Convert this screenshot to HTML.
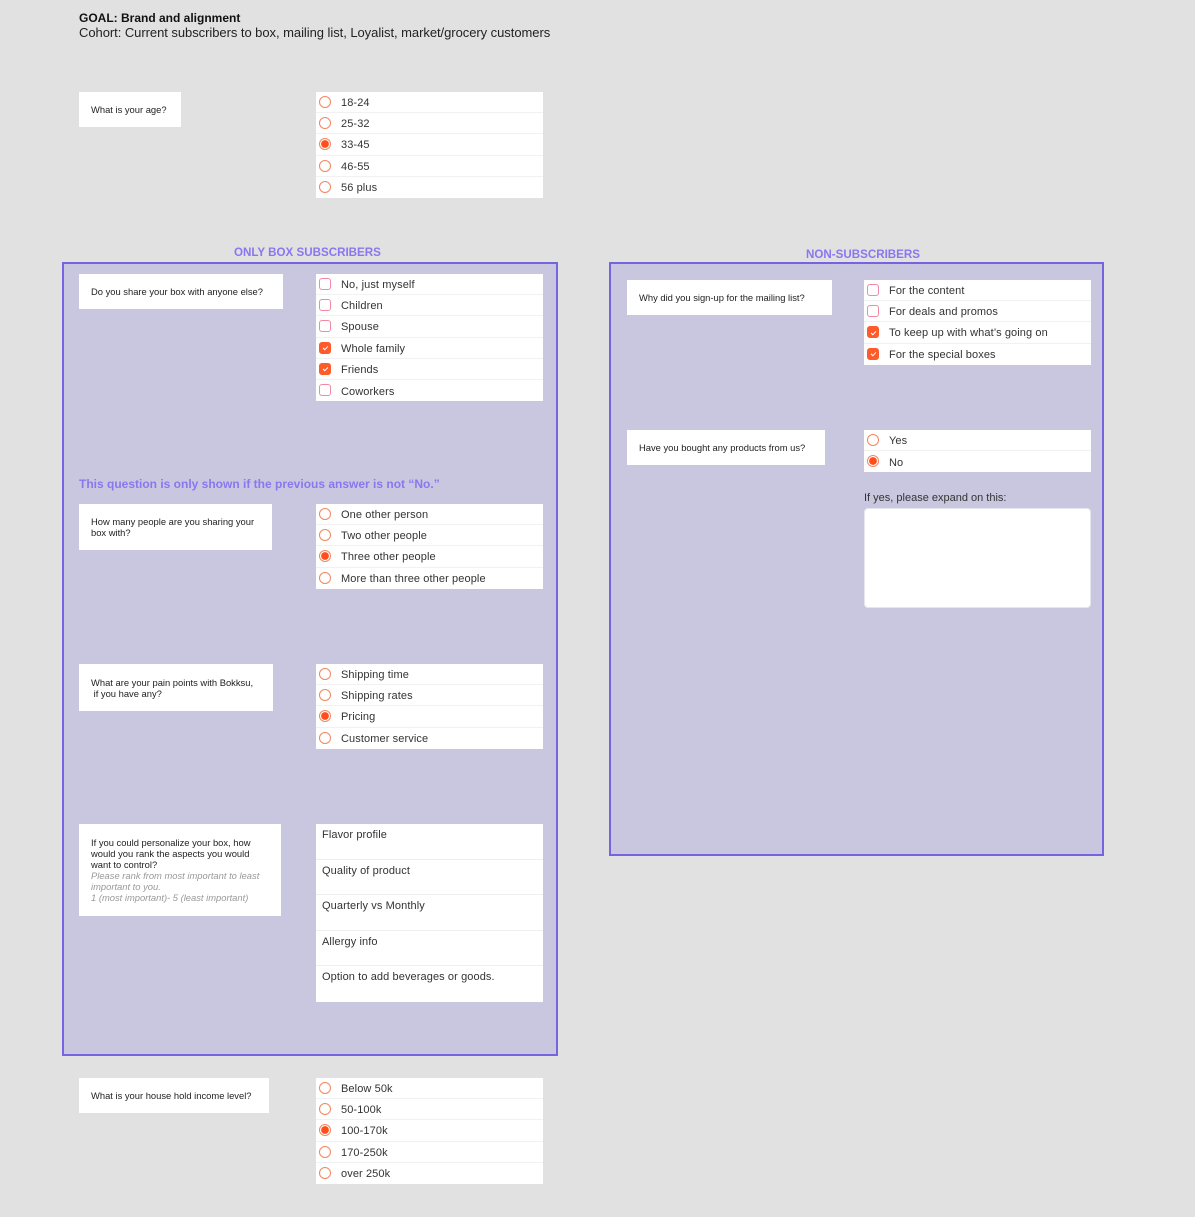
<!DOCTYPE html>
<html><head><meta charset="utf-8"><style>
*{box-sizing:border-box;margin:0;padding:0}
body{width:1195px;height:1217px;background:#e1e1e1;font-family:"Liberation Sans",sans-serif;color:#222;position:relative;overflow:hidden}
.a{position:absolute}
.panel{position:absolute;background:#c9c7e0;border:2px solid #7762e0}
.q{position:absolute;background:#fff;font-size:9.4px;color:#222;padding:0 12px;display:flex;align-items:center;line-height:11px}
.opts{position:absolute;background:#fff;width:227px}
.opts div{height:21.2px;border-bottom:1px solid #f1f1f1;font-size:11px;display:flex;align-items:center;padding-left:25px;padding-top:2px;position:relative;color:#333;letter-spacing:0.1px}
.opts div:last-child{border-bottom:none}
.opts div::before{content:"";position:absolute;left:3px;top:4px;width:12px;height:12px;box-sizing:border-box}
.r div::before{border-radius:50%;border:1.3px solid #f3855f}
.r div.on::before{border:1.3px solid #f3855f;background:radial-gradient(circle,#ff4d1c 0 3.6px,#fff 4.1px)}
.c div::before{border-radius:3px;border:1.3px solid #f08aa5}
.c div.on::before{background:#ff5a2a;border-color:#ff5a2a}
.c div.on::after{content:"";position:absolute;left:7px;top:8.5px;width:4px;height:2px;border-left:1.3px solid #fff;border-bottom:1.3px solid #fff;transform:rotate(-45deg)}
.rank{position:absolute;background:#fff;width:227px}
.rank div{height:35.6px;border-bottom:1px solid #eee;font-size:11px;padding:5px 6px;color:#333;letter-spacing:0.1px}
.rank div:last-child{border-bottom:none}
.title{position:absolute;font-size:11.6px;font-weight:bold;color:#8a76f0;letter-spacing:0}
</style></head><body>
<div class="a" style="left:79px;top:11px;font-size:12px;font-weight:bold;color:#111">GOAL: Brand and alignment</div>
<div class="a" style="left:79px;top:25px;font-size:13px;color:#222;letter-spacing:-0.05px">Cohort: Current subscribers to box, mailing list, Loyalist, market/grocery customers</div>

<div class="q" style="left:79px;top:92px;width:102px;height:35px">What is your age?</div>
<div class="opts r" style="left:316px;top:92px"><div>18-24</div><div>25-32</div><div class="on">33-45</div><div>46-55</div><div>56 plus</div></div>

<div class="title" style="left:234px;top:246px">ONLY BOX SUBSCRIBERS</div>
<div class="panel" style="left:62px;top:262px;width:496px;height:794px"></div>
<div class="title" style="left:806px;top:248px">NON-SUBSCRIBERS</div>
<div class="panel" style="left:609px;top:262px;width:495px;height:594px"></div>

<div class="q" style="left:79px;top:274px;width:204px;height:35px">Do you share your box with anyone else?</div>
<div class="opts c" style="left:316px;top:274px"><div>No, just myself</div><div>Children</div><div>Spouse</div><div class="on">Whole family</div><div class="on">Friends</div><div>Coworkers</div></div>

<div class="a" style="left:79px;top:477px;font-size:12px;font-weight:bold;color:#8a76f0;letter-spacing:0">This question is only shown if the previous answer is not “No.”</div>

<div class="q" style="left:79px;top:504px;width:193px;height:46px">How many people are you sharing your box with?</div>
<div class="opts r" style="left:316px;top:504px"><div>One other person</div><div>Two other people</div><div class="on">Three other people</div><div>More than three other people</div></div>

<div class="q" style="left:79px;top:664px;width:194px;height:47px">What are your pain points with Bokksu,<br>&nbsp;if you have any?</div>
<div class="opts r" style="left:316px;top:664px"><div>Shipping time</div><div>Shipping rates</div><div class="on">Pricing</div><div>Customer service</div></div>

<div class="q" style="left:79px;top:824px;width:202px;height:92px;display:block;padding-top:13px;padding-right:18px">If you could personalize your box, how would you rank the aspects you would want to control?<br><i style="color:#999">Please rank from most important to least important to you.<br>1 (most important)- 5 (least important)</i></div>
<div class="rank" style="left:316px;top:824px"><div>Flavor profile</div><div>Quality of product</div><div>Quarterly vs Monthly</div><div>Allergy info</div><div>Option to add beverages or goods.</div></div>

<div class="q" style="left:627px;top:280px;width:205px;height:35px">Why did you sign-up for the mailing list?</div>
<div class="opts c" style="left:864px;top:280px"><div>For the content</div><div>For deals and promos</div><div class="on">To keep up with what’s going on</div><div class="on">For the special boxes</div></div>

<div class="q" style="left:627px;top:430px;width:198px;height:35px">Have you bought any products from us?</div>
<div class="opts r" style="left:864px;top:430px"><div>Yes</div><div class="on">No</div></div>
<div class="a" style="left:864px;top:492px;font-size:11px;color:#333">If yes, please expand on this:</div>
<div class="a" style="left:864px;top:508px;width:227px;height:100px;background:#fff;border-radius:4px;border:1px solid #e6e6ee"></div>

<div class="q" style="left:79px;top:1078px;width:190px;height:35px">What is your house hold income level?</div>
<div class="opts r" style="left:316px;top:1078px"><div>Below 50k</div><div>50-100k</div><div class="on">100-170k</div><div>170-250k</div><div>over 250k</div></div>
</body></html>
